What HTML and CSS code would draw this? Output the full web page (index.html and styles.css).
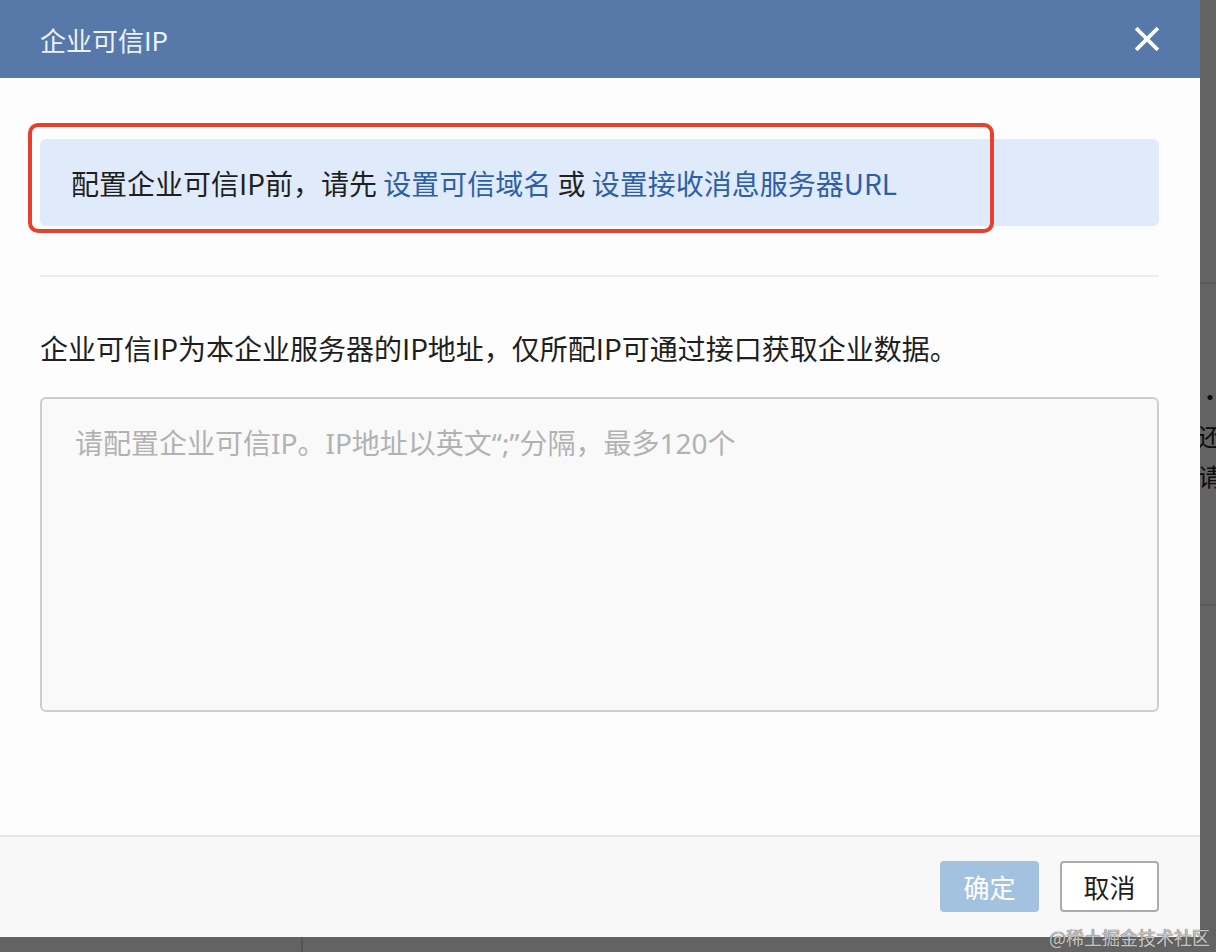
FILE: index.html
```
<!DOCTYPE html>
<html lang="zh-CN">
<head>
  <meta charset="UTF-8">
  <meta name="viewport" content="width=device-width, initial-scale=1.0">
  <title>企业可信IP</title>
  <link rel="stylesheet" href="styles.css">
</head>
<body>
  <!-- 背后的页面，被遮罩盖住 -->
  <div class="page">
    <div class="side"></div>
    <div class="main">
      <div class="main-head"></div>
      <div class="main-text">
        <p>·</p>
        <p>还需要配置相关信息</p>
        <p>请先完成设置</p>
      </div>
      <div class="main-line"></div>
    </div>
  </div>
  <div class="mask"></div>

  <div class="dialog">
    <div class="dialog-head">
      <span class="dialog-title">企业可信IP</span>
      <button class="close-btn" aria-label="关闭">
        <svg width="24" height="24" viewBox="0 0 24 24">
          <path d="M2.5 2.5 L21.5 21.5 M21.5 2.5 L2.5 21.5" stroke="#fff" stroke-width="3.8" stroke-linecap="square"/>
        </svg>
      </button>
    </div>

    <div class="dialog-body">
      <div class="tip">
        配置企业可信IP前，请先 <a href="#">设置可信域名</a> 或 <a href="#">设置接收消息服务器URL</a>
      </div>
      <div class="divider"></div>
      <p class="desc">企业可信IP为本企业服务器的IP地址，仅所配IP可通过接口获取企业数据。</p>
      <textarea class="ip-input" placeholder="请配置企业可信IP。IP地址以英文“;”分隔，最多120个"></textarea>
    </div>

    <div class="dialog-foot">
      <button class="btn btn-primary" disabled>确定</button>
      <button class="btn btn-default">取消</button>
    </div>

    <!-- 截图上的红框标注 -->
    <div class="mark"></div>
  </div>

  <div class="watermark">@稀土掘金技术社区</div>
</body>
</html>
```

FILE: styles.css
```
html, body {
  margin: 0;
  padding: 0;
  height: 100%;
  overflow: hidden;
  font-family: "Noto Sans CJK SC", "Noto Sans", sans-serif;
}
body {
  position: relative;
  background: #fff;
}

/* 背后的页面 */
.page {
  display: flex;
  height: 100%;
  color: #222;
}
.side {
  width: 303px;
  flex-shrink: 0;
  border-right: 2px solid #d8d8d8;
  box-sizing: border-box;
}
.main {
  flex: 1;
  min-width: 0;
  overflow: hidden;
}
.main-head {
  height: 282px;
  border-bottom: 2px solid #e6e6e6;
}
.main-text {
  padding: 92px 0 0 895px;
  font-size: 24px;
  line-height: 40px;
  white-space: nowrap;
}
.main-text p {
  margin: 0;
}
.main-line {
  margin-top: 108px;
  border-bottom: 2px solid #e6e6e6;
}
.mask {
  position: absolute;
  inset: 0;
  background: rgba(0, 0, 0, 0.61);
}

/* 弹窗 */
.dialog {
  position: absolute;
  top: 0;
  left: 0;
  width: 1200px;
  height: 937px;
  background: #fdfdfd;
  display: flex;
  flex-direction: column;
}
.dialog-head {
  height: 78px;
  background: #5779a9;
  display: flex;
  align-items: center;
  justify-content: space-between;
  padding: 0 41px 0 40px;
  box-sizing: border-box;
}
.dialog-title {
  color: #eef1f7;
  font-size: 26px;
}
.close-btn {
  border: none;
  background: none;
  padding: 0;
  width: 24px;
  height: 24px;
  cursor: pointer;
  display: flex;
}
.dialog-body {
  flex: 1;
  padding: 61px 41px 0 40px;
}
.tip {
  background: #dfeafb;
  border-radius: 6px;
  padding: 24px 31px 23px;
  font-size: 28px;
  line-height: 40px;
  color: #1f1f1f;
}
.tip a {
  color: #2f5ea8;
  text-decoration: none;
}
.divider {
  margin-top: 49px;
  height: 2px;
  background: #ececec;
}
.desc {
  margin: 51px 0 0;
  font-size: 28px;
  line-height: 40px;
  color: #1f1f1f;
}
.ip-input {
  display: block;
  margin-top: 29px;
  width: 100%;
  height: 315px;
  box-sizing: border-box;
  border: 2px solid #cdcdcd;
  border-radius: 6px;
  background: #f9f9f9;
  padding: 24px 33px;
  /* 引号用西文字体，和原图一样窄 */
  font-family: "Noto Sans", "Noto Sans CJK SC", sans-serif;
  font-size: 28px;
  line-height: 40px;
  resize: none;
  outline: none;
}
.ip-input::placeholder {
  color: #b2b2b2;
}
.dialog-foot {
  height: 102px;
  box-sizing: border-box;
  border-top: 2px solid #e5e5ea;
  background: #f8f8f8;
  display: flex;
  justify-content: flex-end;
  gap: 21px;
  padding: 24px 41px 0 0;
}
.btn {
  width: 99px;
  height: 51px;
  border-radius: 4px;
  font-family: inherit;
  font-size: 26px;
  padding: 0;
  cursor: pointer;
}
.btn-primary {
  background: #a3c2e0;
  border: 2px solid #a3c2e0;
  color: #fff;
}
.btn-default {
  background: #fff;
  border: 2px solid #acacac;
  color: #1f1f1f;
}

/* 红框标注 */
.mark {
  position: absolute;
  left: 28px;
  top: 123px;
  width: 966px;
  height: 110px;
  box-sizing: border-box;
  border: 4px solid #e8402a;
  border-radius: 10px;
}

.watermark {
  position: absolute;
  right: 6px;
  bottom: 2px;
  font-size: 18px;
  line-height: 26px;
  color: rgba(235, 235, 235, 0.75);
  text-shadow: 0 0 1px #555, 0 0 1px #555;
  white-space: nowrap;
}
```
